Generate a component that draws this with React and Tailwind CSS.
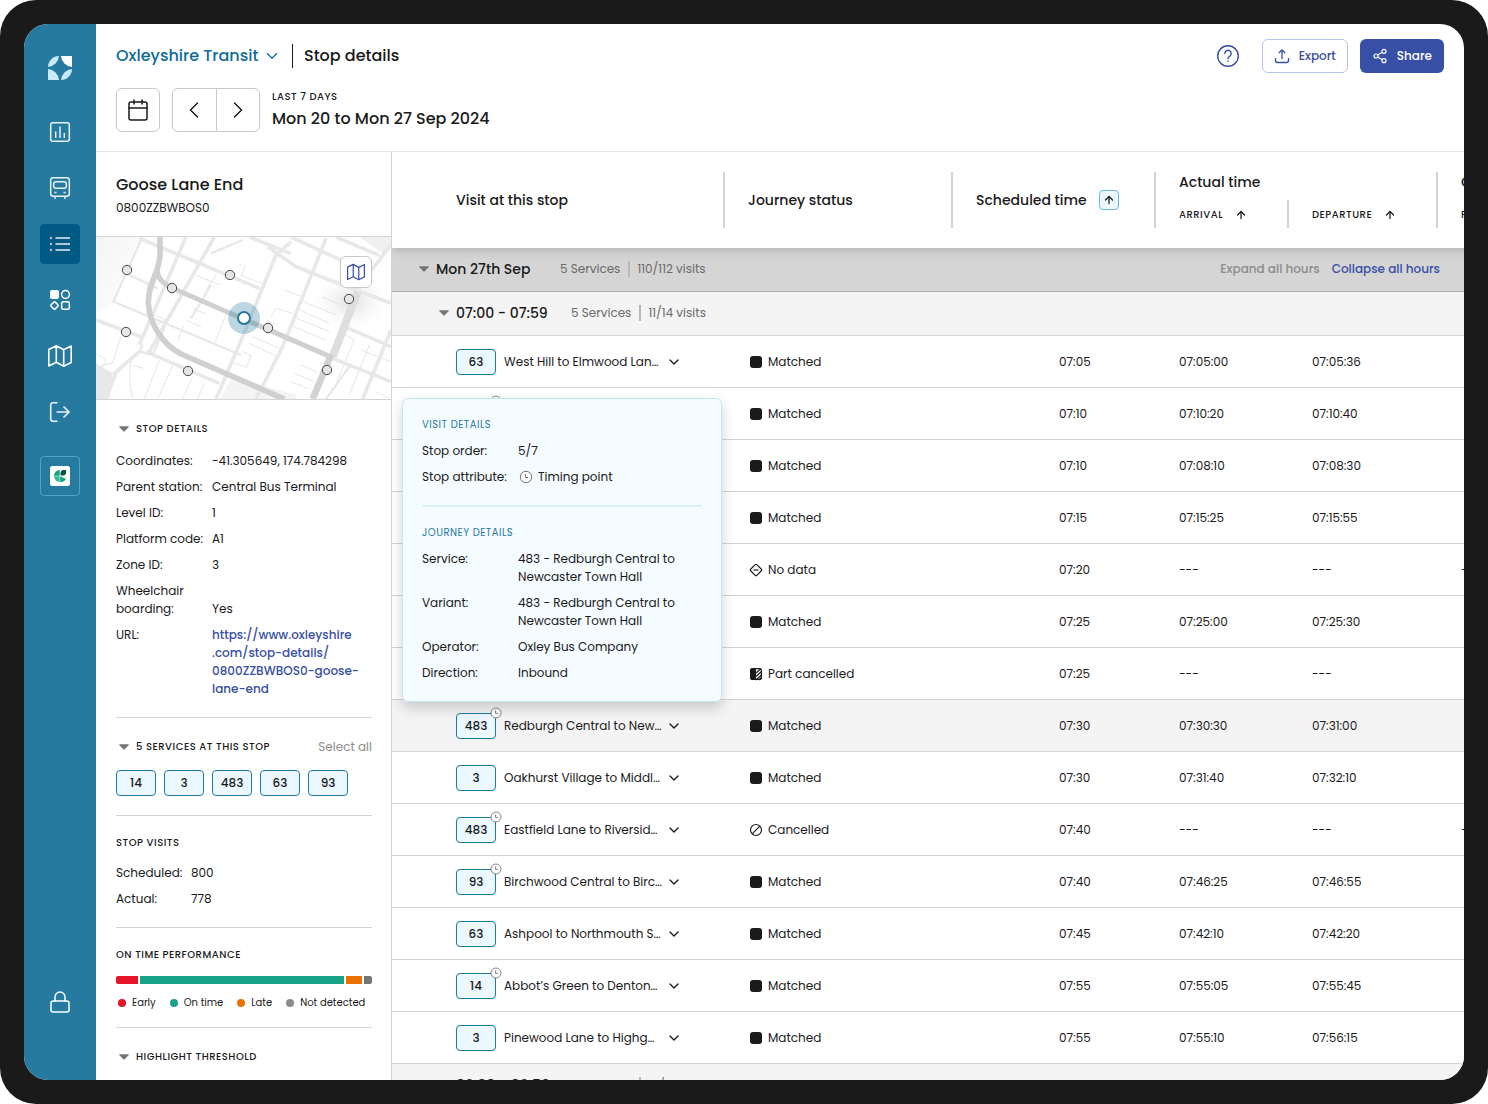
import React, { useState } from "react";
import { Calendar, ChevronDown, ChevronLeft, ChevronRight, ArrowUp, Share2, Lock } from "lucide-react";

const navItems = [
    { id: "reports", label: "Reports", icon: <ReportsIcon /> },
    { id: "vehicles", label: "Vehicles", icon: <BusIcon /> },
    { id: "stops", label: "Stops", icon: <ListIcon /> },
    { id: "categories", label: "Categories", icon: <ShapesIcon /> },
    { id: "map", label: "Map", icon: <MapIcon className="h-6 w-6" /> },
    { id: "logout", label: "Log out", icon: <ExitIcon /> },
];

const stopDetails = [
    { label: "Coordinates:", value: "-41.305649, 174.784298" },
    { label: "Parent station:", value: "Central Bus Terminal" },
    { label: "Level ID:", value: "1" },
    { label: "Platform code:", value: "A1" },
    { label: "Zone ID:", value: "3" },
    { label: "Wheelchair boarding:", value: "Yes" },
];

const services = ["14", "3", "483", "63", "93"];

const performance = [
    { label: "Early", share: 22, color: "bg-[#e51428]", dot: "bg-[#e51428]" },
    { label: "On time", share: 204, color: "bg-[#17a387]", dot: "bg-[#17a387]" },
    { label: "Late", share: 16, color: "bg-[#ec7000]", dot: "bg-[#ec7000]" },
    { label: "Not detected", share: 8, color: "bg-[#757575]", dot: "bg-[#8c8c8c]" },
];

const visits = [
    { service: "63", route: "West Hill to Elmwood Lan…", status: "Matched", scheduled: "07:05", arrival: "07:05:00", departure: "07:05:36" },
    { service: "14", route: "Abbot’s Green to Denton…", timing: true, status: "Matched", scheduled: "07:10", arrival: "07:10:20", departure: "07:10:40" },
    { service: "3", route: "Pinewood Lane to Highg…", status: "Matched", scheduled: "07:10", arrival: "07:08:10", departure: "07:08:30" },
    { service: "63", route: "Ashpool to Northmouth S…", status: "Matched", scheduled: "07:15", arrival: "07:15:25", departure: "07:15:55" },
    { service: "93", route: "Birchwood Central to Birc…", status: "No data", scheduled: "07:20", arrival: "---", departure: "---", last: "---" },
    { service: "3", route: "Oakhurst Village to Middl…", status: "Matched", scheduled: "07:25", arrival: "07:25:00", departure: "07:25:30" },
    { service: "63", route: "West Hill to Elmwood Lan…", status: "Part cancelled", scheduled: "07:25", arrival: "---", departure: "---" },
    { service: "483", route: "Redburgh Central to New…", timing: true, open: true, status: "Matched", scheduled: "07:30", arrival: "07:30:30", departure: "07:31:00" },
    { service: "3", route: "Oakhurst Village to Middl…", status: "Matched", scheduled: "07:30", arrival: "07:31:40", departure: "07:32:10" },
    { service: "483", route: "Eastfield Lane to Riversid…", timing: true, status: "Cancelled", scheduled: "07:40", arrival: "---", departure: "---", last: "---" },
    { service: "93", route: "Birchwood Central to Birc…", timing: true, status: "Matched", scheduled: "07:40", arrival: "07:46:25", departure: "07:46:55" },
    { service: "63", route: "Ashpool to Northmouth S…", status: "Matched", scheduled: "07:45", arrival: "07:42:10", departure: "07:42:20" },
    { service: "14", route: "Abbot’s Green to Denton…", timing: true, status: "Matched", scheduled: "07:55", arrival: "07:55:05", departure: "07:55:45" },
    { service: "3", route: "Pinewood Lane to Highg…", status: "Matched", scheduled: "07:55", arrival: "07:55:10", departure: "07:56:15" },
];

export default function App() {
    const [activeNav, setActiveNav] = useState("stops");

    return (
        <div className="h-screen rounded-[36px] bg-[#1a1a1a] p-6 font-[Poppins,Inter,sans-serif] text-xs text-[#1a1a1a]">
            <div className="flex h-full overflow-hidden rounded-3xl bg-white">
                <NavBar active={activeNav} onSelect={setActiveNav} />
                <div className="flex min-w-0 flex-1 flex-col">
                    <Header />
                    <div className="flex min-h-0 flex-1">
                        <StopPanel />
                        <VisitsTable />
                    </div>
                </div>
            </div>
        </div>
    );
}

// Left navigation rail
function NavBar({ active, onSelect }) {
    return (
        <nav className="flex w-18 shrink-0 flex-col items-center bg-[#267aa0] pt-8 text-white">
            <Logo />
            <div className="mt-8 flex flex-col gap-4">
                {navItems.map((item) => (
                    <button
                        key={item.id}
                        aria-label={item.label}
                        onClick={() => onSelect(item.id)}
                        className={`flex h-10 w-10 items-center justify-center rounded ${active === item.id ? "bg-[#005a83]" : ""}`}
                    >
                        {item.icon}
                    </button>
                ))}
            </div>
            <button aria-label="Operator" className="mt-6 flex h-10 w-10 items-center justify-center rounded border border-[#4aa5cd]">
                <OperatorLogo />
            </button>
            <button aria-label="Privacy" className="mt-auto mb-[58px] flex h-10 w-10 items-center justify-center">
                <Lock size={24} strokeWidth={1.5} />
            </button>
        </nav>
    );
}

// Title, actions and date range
function Header() {
    return (
        <header className="flex flex-col gap-[15px] border-b border-[#e0e0e0] px-5 pt-[15px] pb-[19px]">
            <div className="flex items-center justify-between">
                <div className="flex items-center text-base font-medium">
                    <div className="relative flex items-center">
                        <select aria-label="Network" className="appearance-none bg-transparent pr-[22px] text-[#0e6c96]">
                            <option>Oxleyshire Transit</option>
                        </select>
                        <ChevronDown size={18} strokeWidth={1.75} className="pointer-events-none absolute right-0 text-[#0e6c96]" />
                    </div>
                    <span className="mx-[11px] h-6 w-px bg-[#1a1a1a]" />
                    <h1>Stop details</h1>
                </div>
                <div className="flex items-center gap-3 font-medium">
                    <button aria-label="Help" className="mr-2.5 text-[#374fa5]">
                        <HelpIcon />
                    </button>
                    <button className="flex h-[34px] items-center gap-[9px] rounded-md border border-[#b5c5ea] px-[11px] text-[#374fa5]">
                        <UploadIcon />
                        Export
                    </button>
                    <button className="flex h-[34px] items-center gap-[9px] rounded-md bg-[#374fa5] px-3 text-white">
                        <Share2 size={16} strokeWidth={1.75} />
                        Share
                    </button>
                </div>
            </div>
            <div className="flex items-center gap-3">
                <button aria-label="Pick dates" className="flex h-11 w-11 items-center justify-center rounded-md border border-[#c8c8c8]">
                    <Calendar size={24} strokeWidth={1.5} />
                </button>
                <div className="flex h-11 w-[88px] divide-x divide-[#c8c8c8] rounded-md border border-[#c8c8c8]">
                    <button aria-label="Previous week" className="flex flex-1 items-center justify-center">
                        <ChevronLeft size={28} strokeWidth={1.25} />
                    </button>
                    <button aria-label="Next week" className="flex flex-1 items-center justify-center">
                        <ChevronRight size={28} strokeWidth={1.25} />
                    </button>
                </div>
                <div className="flex flex-col gap-0.5">
                    <p className="text-[10px] leading-4 font-medium tracking-wider">LAST 7 DAYS</p>
                    <p className="text-base font-medium">Mon 20 to Mon 27 Sep 2024</p>
                </div>
            </div>
        </header>
    );
}

function SectionTitle({ children, collapsible }) {
    return (
        <h3 className="flex items-center gap-1 text-[10px] leading-4 font-medium tracking-wider">
            {collapsible && <Caret />}
            {children}
        </h3>
    );
}

function ServiceBadge({ children, timing }) {
    return (
        <span className="relative flex h-[26px] w-10 shrink-0 items-center justify-center rounded border border-[#1f7aa2] bg-[#ebf8ff] font-medium">
            {children}
            {timing && (
                <span className="absolute -top-2 -right-2">
                    <ClockIcon className="h-3.5 w-3.5" />
                </span>
            )}
        </span>
    );
}

// Stop information next to the table
function StopPanel() {
    return (
        <aside className="w-[296px] shrink-0 overflow-hidden border-r border-[#d4d4d4]">
            <div className="border-b border-[#d4d4d4] px-5 pt-[21px] pb-[18px]">
                <h2 className="text-base font-medium">Goose Lane End</h2>
                <p className="mt-px leading-5">0800ZZBWBOS0</p>
            </div>
            <div className="relative border-b border-[#d4d4d4]">
                <StreetMap />
                <button aria-label="Open map" className="absolute top-[19px] right-[19px] flex h-8 w-8 items-center justify-center rounded-md border border-[#c8c8c8] bg-white text-[#374fa5]">
                    <MapIcon className="h-[18px] w-[18px]" />
                </button>
            </div>

            <div className="flex flex-col pr-[19px] pl-5">
                <section className="border-b border-[#d4d4d4] pt-[21px] pb-[19px]">
                    <SectionTitle collapsible>STOP DETAILS</SectionTitle>
                    <dl className="mt-[15px] flex flex-col gap-2 leading-[18px]">
                        {stopDetails.map((row) => (
                            <div key={row.label} className="flex items-end">
                                <dt className="w-24 shrink-0">{row.label}</dt>
                                <dd>{row.value}</dd>
                            </div>
                        ))}
                        <div className="flex">
                            <dt className="w-24 shrink-0">URL:</dt>
                            <dd>
                                <a href="#stop" className="font-medium text-[#374fa5]">
                                    https://www.oxleyshire<br />.com/stop-details/<br />0800ZZBWBOS0-goose-<br />lane-end
                                </a>
                            </dd>
                        </div>
                    </dl>
                </section>

                <section className="border-b border-[#d4d4d4] pt-[21px] pb-[19px]">
                    <div className="flex items-center justify-between">
                        <SectionTitle collapsible>5 SERVICES AT THIS STOP</SectionTitle>
                        <button className="leading-4 text-[#8c8c8c]">Select all</button>
                    </div>
                    <div className="mt-[15px] flex gap-2">
                        {services.map((s) => (
                            <ServiceBadge key={s}>{s}</ServiceBadge>
                        ))}
                    </div>
                </section>

                <section className="border-b border-[#d4d4d4] pt-[19px] pb-[19px]">
                    <SectionTitle>STOP VISITS</SectionTitle>
                    <dl className="mt-[13px] flex flex-col gap-2 leading-[18px]">
                        <div className="flex">
                            <dt className="w-[75px]">Scheduled:</dt>
                            <dd>800</dd>
                        </div>
                        <div className="flex">
                            <dt className="w-[75px]">Actual:</dt>
                            <dd>778</dd>
                        </div>
                    </dl>
                </section>

                <section className="border-b border-[#d4d4d4] pt-[19px] pb-4">
                    <SectionTitle>ON TIME PERFORMANCE</SectionTitle>
                    <div className="mt-[13px] flex h-2 gap-0.5 overflow-hidden rounded-xs">
                        {performance.map((p) => (
                            <span key={p.label} className={p.color} style={{ flexGrow: p.share }} />
                        ))}
                    </div>
                    <ul className="mt-[11px] flex gap-3.5 pl-0.5 text-[10px] leading-4">
                        {performance.map((p) => (
                            <li key={p.label} className="flex items-center gap-1.5 whitespace-nowrap">
                                <span className={`h-2 w-2 rounded-full ${p.dot}`} />
                                {p.label}
                            </li>
                        ))}
                    </ul>
                </section>

                <section className="pt-[21px]">
                    <SectionTitle collapsible>HIGHLIGHT THRESHOLD</SectionTitle>
                </section>
            </div>
        </aside>
    );
}

function VisitsTable() {
    return (
        <main className="@container min-w-0 flex-1 overflow-hidden">
            <table className="w-[1184px] min-w-full table-fixed border-separate border-spacing-0 text-left">
                <colgroup>
                    <col className="w-[331px]" />
                    <col className="w-[228px]" />
                    <col className="w-[203px]" />
                    <col className="w-[133px]" />
                    <col className="w-[149px]" />
                    <col />
                </colgroup>
                <thead className="relative z-10 bg-white text-sm shadow-[0_2px_10px_rgba(0,0,0,0.18)]">
                    <tr>
                        <th rowSpan={2} className="p-0 pl-16 font-medium">Visit at this stop</th>
                        <th rowSpan={2} className="p-0 font-medium">
                            <div className="flex h-14 items-center border-l-2 border-[#d4d4d4] pl-[23px]">Journey status</div>
                        </th>
                        <th rowSpan={2} className="p-0 font-medium">
                            <div className="flex h-14 items-center gap-3 border-l-2 border-[#d4d4d4] pl-[23px] whitespace-nowrap">
                                Scheduled time
                                <button aria-label="Sort by scheduled time" className="flex h-5 w-5 items-center justify-center rounded border border-[#6bb9dc] bg-[#ebf8ff]">
                                    <SortIcon />
                                </button>
                            </div>
                        </th>
                        <th colSpan={2} className="p-0 pt-5 font-medium">
                            <div className="h-7 border-l-2 border-[#d4d4d4] pl-[23px] leading-5">Actual time</div>
                        </th>
                        <th className="p-0 pt-5 font-medium">
                            <div className="h-7 border-l-2 border-[#d4d4d4] pl-[23px] leading-5">Observed</div>
                        </th>
                    </tr>
                    <tr className="text-[10px] tracking-wider">
                        <th className="p-0 pb-5 font-medium">
                            <div className="flex h-7 items-center gap-3 border-l-2 border-[#d4d4d4] pt-0.5 pl-[23px]">
                                ARRIVAL <SortIcon />
                            </div>
                        </th>
                        <th className="p-0 pb-5 font-medium">
                            <div className="flex h-7 items-center gap-3 border-l-2 border-[#d4d4d4] pt-0.5 pl-[23px]">
                                DEPARTURE <SortIcon />
                            </div>
                        </th>
                        <th className="p-0 pb-5 font-medium">
                            <div className="flex h-7 items-center border-l-2 border-[#d4d4d4] pt-0.5 pl-[23px]">PATTERN</div>
                        </th>
                    </tr>
                </thead>
                <tbody>
                    <tr className="bg-[#d5d5d5]">
                        <td colSpan={6} className="border-b border-[#adadad] p-0">
                            <div className="flex h-[43px] w-[100cqw] items-center pr-6 pb-0.5 pl-6">
                                <Caret />
                                <h2 className="ml-1 w-[124px] text-sm font-medium">Mon 27th Sep</h2>
                                <Counts services="5 Services" visits="110/112 visits" />
                                <button className="mr-3 ml-auto font-medium text-[#8c8c8c]">Expand all hours</button>
                                <button className="font-medium text-[#374fa5]">Collapse all hours</button>
                            </div>
                        </td>
                    </tr>
                    <HourRow hours="07:00 - 07:59" services="5 Services" visits="11/14 visits" />
                    {visits.map((visit, index) => (
                        <VisitRow key={index} visit={visit} />
                    ))}
                    <HourRow hours="08:00 - 08:59" services="5 Services" visits="12/14 visits" />
                </tbody>
            </table>
        </main>
    );
}

const SortIcon = () => <ArrowUp size={12} strokeWidth={2.5} />;

const Counts = ({ services, visits }) => (
    <p className="flex items-center text-[#6b6b6b]">
        {services}
        <span className="mr-[7px] ml-2 h-4 w-0.5 bg-[#b8b8b8]" />
        {visits}
    </p>
);

const HourRow = ({ hours, services, visits }) => (
    <tr className="bg-[#f4f4f4]">
        <td colSpan={6} className="border-b border-[#d4d4d4] p-0">
            <div className="flex h-[43px] items-center pb-0.5 pl-11">
                <Caret />
                <h3 className="ml-1 w-[115px] text-sm font-medium">{hours}</h3>
                <Counts services={services} visits={visits} />
            </div>
        </td>
    </tr>
);

const VisitRow = ({ visit }) => (
    <tr className={visit.open ? "bg-[#f4f4f4]" : "bg-white"}>
        <td className="relative h-[52px] border-b border-[#d4d4d4] p-0 pl-16">
            <div className="flex items-center gap-2">
                <ServiceBadge timing={visit.timing}>{visit.service}</ServiceBadge>
                <span className="w-[154px] whitespace-nowrap">{visit.route}</span>
                <button aria-label="Visit details">
                    <ChevronDown size={16} />
                </button>
            </div>
            {visit.open && <VisitPopover />}
        </td>
        <td className="border-b border-[#d4d4d4] p-0 pl-[25px]">
            <span className="flex items-center gap-1">
                <StatusIcon status={visit.status} />
                {visit.status}
            </span>
        </td>
        <td className="border-b border-[#d4d4d4] p-0 pl-[108px]">{visit.scheduled}</td>
        <td className="border-b border-[#d4d4d4] p-0 pl-[25px]">{visit.arrival}</td>
        <td className="border-b border-[#d4d4d4] p-0 pl-[25px]">{visit.departure}</td>
        <td className="border-b border-[#d4d4d4] p-0 pl-[25px]">{visit.last}</td>
    </tr>
);

// Details shown above the open row
const VisitPopover = () => (
    <div className="absolute bottom-[49px] left-2.5 z-20 w-80 rounded-md border border-[#c3e7f7] bg-[#f5fcff] px-[19px] pt-[18px] pb-[19px] leading-[18px] shadow-[0_6px_14px_rgba(0,0,0,0.18)]">
        <h4 className="text-[10px] leading-4 tracking-wider text-[#1f7aa2]">VISIT DETAILS</h4>
        <dl className="mt-[9px] flex flex-col gap-2">
            <div className="flex">
                <dt className="w-24 shrink-0">Stop order:</dt>
                <dd>5/7</dd>
            </div>
            <div className="flex">
                <dt className="w-24 shrink-0">Stop attribute:</dt>
                <dd className="flex items-center gap-1">
                    <ClockIcon className="h-4 w-4" />
                    Timing point
                </dd>
            </div>
        </dl>
        <hr className="mt-[19px] border-t-2 border-[#dcf2fb]" />
        <h4 className="mt-[18px] text-[10px] leading-4 tracking-wider text-[#1f7aa2]">JOURNEY DETAILS</h4>
        <dl className="mt-[9px] flex flex-col gap-2">
            <div className="flex">
                <dt className="w-24 shrink-0">Service:</dt>
                <dd>483 - Redburgh Central to<br />Newcaster Town Hall</dd>
            </div>
            <div className="flex">
                <dt className="w-24 shrink-0">Variant:</dt>
                <dd>483 - Redburgh Central to<br />Newcaster Town Hall</dd>
            </div>
            <div className="flex">
                <dt className="w-24 shrink-0">Operator:</dt>
                <dd>Oxley Bus Company</dd>
            </div>
            <div className="flex">
                <dt className="w-24 shrink-0">Direction:</dt>
                <dd>Inbound</dd>
            </div>
        </dl>
    </div>
);

function StatusIcon({ status }) {
    return (
        <svg viewBox="0 0 16 16" className="h-4 w-4 shrink-0" fill="none" stroke="#1a1a1a" strokeWidth="1.2">
            {status === "Matched" && <rect x="2" y="2" width="12" height="12" rx="3" fill="#1a1a1a" stroke="none" />}
            {status === "No data" && (
                <>
                    <path d="M7.2 2.6a1.1 1.1 0 0 1 1.6 0l4.6 4.6a1.1 1.1 0 0 1 0 1.6l-4.6 4.6a1.1 1.1 0 0 1-1.6 0L2.6 8.8a1.1 1.1 0 0 1 0-1.6Z" />
                    <path d="M5.5 8h5" />
                </>
            )}
            {status === "Part cancelled" && (
                <>
                    <rect x="2.6" y="2.6" width="10.8" height="10.8" rx="2" />
                    <path d="M4.5 2H8v12H4.5A2.5 2.5 0 0 1 2 11.5v-7A2.5 2.5 0 0 1 4.5 2Z" fill="#1a1a1a" stroke="none" />
                    <path d="M8 7l5-4.5M8 10.5l5.5-5M8 14l5.5-5M11 14l2.5-2.5" />
                </>
            )}
            {status === "Cancelled" && (
                <>
                    <circle cx="8" cy="8" r="5.5" />
                    <path d="M4.2 11.8l7.6-7.6" />
                </>
            )}
        </svg>
    );
}

function Caret() {
    return (
        <svg viewBox="0 0 16 16" className="h-4 w-4 shrink-0" fill="#757575">
            <path d="M3.8 5.200h8.400c.6 0 .8.600.4 1l-3.700 3.800a1.200 1.200 0 0 1-1.800 0L3.400 6.200c-.4-.4-.2-1 .4-1Z" />
        </svg>
    );
}

function ClockIcon({ className }) {
    return (
        <svg viewBox="0 0 16 16" className={className} fill="#fff" stroke="#757575">
            <circle cx="8" cy="8" r="5.700" />
            <path d="M7.500 5v3.500h2.700" fill="none" />
        </svg>
    );
}

function Logo() {
    return (
        <svg viewBox="0 0 24 24" className="h-6 w-6" fill="#c8eafa">
            <path d="M11 0A12 12 0 0 1 0 11 11 11 0 0 1 11 0Z" />
            <path d="M13 0h11v11A12 12 0 0 1 13 0Z" fill="#fff" />
            <path d="M0 13a12 12 0 0 1 11 11H0Z" />
            <path d="M24 13a12 12 0 0 0-11 11A11 11 0 0 0 24 13Z" />
        </svg>
    );
}

function OperatorLogo() {
    return (
        <svg viewBox="0 0 20 20" className="h-5 w-5">
            <rect width="20" height="20" rx="2.5" fill="#fff" />
            <path d="M9.7 4v5.800H4A6 6 0 0 1 9.700 4Z" fill="#12a37f" />
            <path d="M4 10.200h5.700V16A6 6 0 0 1 4 10.200Z" fill="#2fbd97" />
            <path d="M10.200 10.200L16 13a6 6 0 0 1-5.800 3Z" fill="#12a37f" />
            <path d="M10.500 9.500V7a3 3 0 0 1 3-3H16v2.500a3 3 0 0 1-3 3Z" fill="#065445" />
        </svg>
    );
}

function ReportsIcon() {
    return (
        <svg viewBox="0 0 24 24" className="h-6 w-6" fill="none" stroke="currentColor" strokeWidth="1.5" opacity="0.9">
            <rect x="2.700" y="2.700" width="18.600" height="18.600" rx="2" />
            <path d="M7.700 11.500V18M12 6.500V18M16.300 13v5" />
        </svg>
    );
}

function BusIcon() {
    return (
        <svg viewBox="0 0 24 24" className="h-6 w-6" fill="none" stroke="currentColor" strokeWidth="1.5" opacity="0.9">
            <rect x="2.700" y="1.700" width="18.600" height="18.600" rx="2.500" />
            <rect x="5.700" y="5.700" width="12.600" height="6.600" rx="2" />
            <path d="M6.500 16.500h2M15.500 16.500h2M7 20.500v2.500M17 20.500v2.500" />
        </svg>
    );
}

function ListIcon() {
    return (
        <svg viewBox="0 0 24 24" className="h-6 w-6" fill="none" stroke="currentColor" strokeWidth="1.5" opacity="0.9">
            <path d="M7.500 6H22M7.500 12H22M7.500 18H22M2 6h2M2 12h2M2 18h2" />
        </svg>
    );
}

function ShapesIcon() {
    return (
        <svg viewBox="0 0 24 24" className="h-6 w-6" fill="none" stroke="currentColor" strokeWidth="1.5">
            <rect x="2" y="2" width="9" height="9" rx="2" fill="currentColor" stroke="none" />
            <circle cx="17.500" cy="6.500" r="3.900" />
            <rect x="13.700" y="13.700" width="7.600" height="7.600" rx="1.500" />
            <rect x="3.600" y="14.600" width="5.800" height="5.800" rx="1" transform="rotate(45 6.500 17.500)" />
        </svg>
    );
}

function MapIcon({ className }) {
    return (
        <svg viewBox="0 0 24 24" className={className} fill="none" stroke="currentColor" strokeWidth="1.6" strokeLinejoin="round">
            <path d="M.8 5.500L8.300 1.800l7.400 4 7.500-3.800v16.500l-7.500 3.800-7.400-4L.8 22ZM8.300 1.800v16.500M15.700 5.800v16.500" />
        </svg>
    );
}

function ExitIcon() {
    return (
        <svg viewBox="0 0 24 24" className="h-6 w-6" fill="none" stroke="currentColor" strokeWidth="1.6" opacity="0.9">
            <path d="M9.500 2.700H5a2.300 2.300 0 0 0-2.300 2.300v14A2.300 2.300 0 0 0 5 21.300h4.500M8.500 12h12.500M15.500 6.500L21 12l-5.500 5.500" />
        </svg>
    );
}

function HelpIcon() {
    return (
        <svg viewBox="0 0 24 24" className="h-6 w-6" fill="none" stroke="currentColor" strokeWidth="1.4" strokeLinecap="round">
            <circle cx="12" cy="12" r="10.300" />
            <path d="M8.800 9.500a3.200 3.200 0 1 1 5.200 2.500c-1.200.9-2 1.300-2 2.700M12 17.300v.2" />
        </svg>
    );
}

function UploadIcon() {
    return (
        <svg viewBox="0 0 16 16" className="h-4 w-4" fill="none" stroke="currentColor" strokeWidth="1.3">
            <path d="M8 11V2M4.800 5L8 1.800 11.200 5M1.500 10v2.500a2 2 0 0 0 2 2h9a2 2 0 0 0 2-2V10" />
        </svg>
    );
}

// Streets around the stop, with neighbouring stops marked
function StreetMap() {
    const stops = [[93, 120], [228, 174], [402, 135], [759, 207], [90, 306], [516, 294], [693, 420], [276, 423]];

    return (
        <svg viewBox="0 21 885 486" preserveAspectRatio="xMidYMid slice" className="block h-[162px] w-full" fill="none">
            <defs>
                <linearGradient id="shade" x1="0" y1="0" x2="1" y2="1">
                    <stop offset="0" stopColor="#f4f4f4" />
                    <stop offset="1" stopColor="#ffffff" />
                </linearGradient>
                <radialGradient id="halo">
                    <stop offset="0" stopColor="#e0e0e0" />
                    <stop offset="1" stopColor="#ffffff" stopOpacity="0" />
                </radialGradient>
            </defs>
            <path d="M0 21H130L50 220 0 250Z" fill="url(#shade)" />
            <path d="M790 21H885V55L860 70Z" fill="#f0f0f0" />
            <ellipse cx="765" cy="215" rx="130" ry="95" fill="url(#halo)" />
            <path d="M0 400L50 430 40 507H0Z" fill="#e8e8e8" />
            <path d="M410 440L600 495V507H370Z" fill="#f4f4f4" />
            <g stroke="#e6e6e6" strokeWidth="3">
                <path d="M430 103l17 8-12 25 75 30M300 135l70 30M330 180l30-45M568 180l45 18M525 260l15-25 50 15M600 235l100 45M590 260l110 45M580 285l110 45M610 210l110 45M680 200l60 28M470 320l80 35M460 340l85 40M440 365l25 12-14 35-35-12M615 405l50 22M595 430l60 25M585 455l50 20M740 310l35 20-55 130M820 345l-60 150M290 235l40 17M270 270l45 20M245 330l20-45M105 395q-10 50 5 110M190 390l-45 117M235 395l-50 112M290 440l-30 67M325 460l-20 47M150 245l60 25M180 285l30-15M75 320q-20 60-25 80l-35 5M0 370l30 20-15 30M110 405l33 10M795 360l90 35M840 485l40 20M510 270l30 12M355 340l35-85" />
            </g>
            <g stroke="#e8e8e8" strokeWidth="11">
                <path d="M130 25L490 175M270 21L130 345M355 21L155 375M460 21l125 50M515 50l85 60 100 40 185 70M585 21l140 65 70 30M690 25L560 350 480 507M585 35L540 75 440 320 360 507M0 270l135 50M150 365l220 95M130 365L50 435M30 507l30-80M720 21l130 55M885 45L780 180M745 290l140 60M885 300L800 507M710 385l175 70" />
            </g>
            <g stroke="#e8e8e8" strokeWidth="7">
                <path d="M135 30L52 215 435 375M100 135l85 40M440 30L345 70M140 345l-10 20 40 10 35-80M345 165l-60 100M760 410L690 507" />
            </g>
            <path d="M785 185L710 380" stroke="#dedede" strokeWidth="24" />
            <path d="M705 375L650 507" stroke="#d2d2d2" strokeWidth="20" />
            <g stroke="#d0d0d0" strokeLinejoin="round">
                <path d="M192 21V75C190 130 155 160 157 220C162 290 205 345 255 372L565 507" strokeWidth="17" />
                <path d="M185 120Q180 150 228 174L708 382" strokeWidth="15" />
            </g>
            {stops.map(([x, y]) => (
                <circle key={`${x}-${y}`} cx={x} cy={y} r="14" fill="#e6e6e6" stroke="#444" strokeWidth="3" />
            ))}
            <circle cx="444" cy="264" r="48" fill="#267aa0" opacity="0.3" />
            <circle cx="444" cy="264" r="18" fill="#fff" stroke="#267aa0" strokeWidth="6" />
        </svg>
    );
}
